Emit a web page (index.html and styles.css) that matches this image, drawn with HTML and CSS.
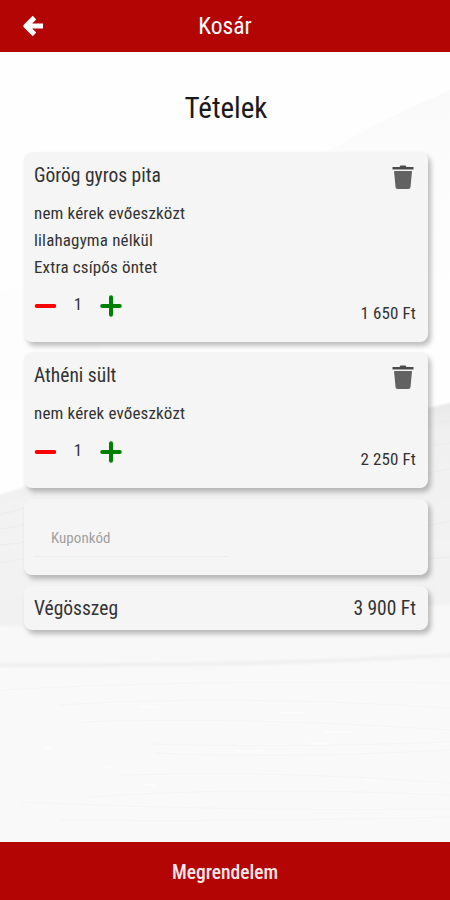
FILE: index.html
```html
<!DOCTYPE html>
<html lang="hu">
<head>
<meta charset="utf-8">
<meta name="viewport" content="width=device-width, initial-scale=1">
<title>Kosár</title>
<link rel="stylesheet" href="styles.css">
</head>
<body>
<div class="screen">
  <svg class="backdrop" viewBox="0 0 450 900" preserveAspectRatio="none" aria-hidden="true">
    <defs>
      <linearGradient id="wave" x1="0" y1="0" x2="0" y2="1">
        <stop offset="0" stop-color="#e8e8e8"/>
        <stop offset=".12" stop-color="#f0f0f0"/>
        <stop offset=".6" stop-color="#f3f3f3"/>
        <stop offset="1" stop-color="#f1f1f1"/>
      </linearGradient>
      <linearGradient id="ridge" x1="0" y1="0" x2="0" y2="1">
        <stop offset="0" stop-color="#fafafa"/>
        <stop offset="1" stop-color="#fefefe"/>
      </linearGradient>
      <filter id="soft"><feGaussianBlur stdDeviation="1.2"/></filter>
    </defs>
    <rect width="450" height="900" fill="#fefefe"/>
    <path d="M300 168Q370 124 450 90V300H0V292Q150 250 300 168Z" fill="url(#ridge)"/>
    <path d="M0 292L100 272V400H0Z" fill="#fdfdfd"/>
    <g filter="url(#soft)">
      <path d="M-5 496Q60 474 150 462T455 402V640H-5Z" fill="url(#wave)"/>
      <path d="M-5 626Q180 630 455 604V700H-5Z" fill="#f8f8f8"/>
      <path d="M-5 665Q240 667 455 655" fill="none" stroke="#f0f0f0" stroke-width="4"/>
      <path d="M-5 669Q240 671 455 659V910H-5Z" fill="#f9f9f9"/>
    </g>
    <g fill="none" stroke="#e9e9e9" stroke-width="1" opacity=".7">
      <path d="M0 514Q16 512 30 506M0 529Q16 527 30 523M0 545Q16 544 30 541M0 563Q16 561 30 557M425 425Q438 421 450 421M425 447Q438 444 450 443M425 474Q438 471 450 469M425 526Q438 524 450 521M425 559Q438 558 450 557"/>
    </g>
    <g fill="none" stroke="#f5f5f5" stroke-width="1">
      <path d="M0 690Q200 679 450 683M60 705Q230 694 450 708M80 722Q240 716 450 730M150 744Q280 748 450 742M155 753Q280 759 450 750M120 775Q280 770 450 783M90 797Q240 786 450 795M20 802Q240 812 450 809M60 820Q240 822 450 817"/>
    </g>
    <g fill="none" stroke="#fefefe" stroke-width="1">
      <path d="M140 707h18M325 732h26M310 744h22M236 751h30M145 785h10M365 780h11M280 713h24M45 748h8M104 767h6"/>
    </g>
  </svg>

  <header class="topbar">
    <svg class="back" viewBox="0 0 20 22" role="button" aria-label="Vissza"><path d="M11.500 2.600L3 11L11.500 19.400M4 11H20" fill="none" stroke="#fff" stroke-width="5" stroke-linejoin="round"/></svg>
    <h1 class="topbar-title">Kosár</h1>
  </header>

  <main class="content">
    <h2 class="heading">Tételek</h2>

    <section class="card item">
      <div class="row">
        <h3 class="name">Görög gyros pita</h3>
        <svg class="trash" viewBox="0 0 22 24"><path d="M.5 2H7.500L8.500.5H13.500L14.500 2H21.500V4.500H.5Z" fill="#4a4a4a"/><path d="M2 6H20L18.500 22Q18.300 24 16.500 24H5.500Q3.700 24 3.500 22Z" fill="#626262"/></svg>
      </div>
      <ul class="extras">
        <li>nem kérek evőeszközt</li>
        <li>lilahagyma nélkül</li>
        <li>Extra csípős öntet</li>
      </ul>
      <div class="row foot">
        <div class="stepper">
          <svg class="op" viewBox="0 0 22 22"><path d="M2.700 11H20.300" stroke="red" stroke-width="4" stroke-linecap="round"/></svg>
          <span class="qty">1</span>
          <svg class="op" viewBox="0 0 22 22"><path d="M2.200 11H19.800M11 2.200V19.800" stroke="green" stroke-width="4" stroke-linecap="round"/></svg>
        </div>
        <span class="price">1 650 Ft</span>
      </div>
    </section>

    <section class="card item">
      <div class="row">
        <h3 class="name">Athéni sült</h3>
        <svg class="trash" viewBox="0 0 22 24"><path d="M.5 2H7.500L8.500.5H13.500L14.500 2H21.500V4.500H.5Z" fill="#4a4a4a"/><path d="M2 6H20L18.500 22Q18.300 24 16.500 24H5.500Q3.700 24 3.500 22Z" fill="#626262"/></svg>
      </div>
      <ul class="extras">
        <li>nem kérek evőeszközt</li>
      </ul>
      <div class="row foot">
        <div class="stepper">
          <svg class="op" viewBox="0 0 22 22"><path d="M2.700 11H20.300" stroke="red" stroke-width="4" stroke-linecap="round"/></svg>
          <span class="qty">1</span>
          <svg class="op" viewBox="0 0 22 22"><path d="M2.200 11H19.800M11 2.200V19.800" stroke="green" stroke-width="4" stroke-linecap="round"/></svg>
        </div>
        <span class="price">2 250 Ft</span>
      </div>
    </section>

    <section class="card coupon">
      <div class="field"><span class="hint">Kuponkód</span></div>
    </section>

    <section class="card total">
      <span class="sum-label">Végösszeg</span>
      <span class="sum">3 900 Ft</span>
    </section>
  </main>

  <footer class="order"><span class="order-label">Megrendelem</span></footer>
</div>
</body>
</html>
```
FILE: styles.css
```css
* { box-sizing: border-box; margin: 0; padding: 0; }

body {
  font-family: "Roboto Condensed", Roboto, sans-serif;
  font-stretch: 75%;
  font-weight: 400;
  color: #333;
}

h1, h2, h3 { font-weight: 400; }

.screen {
  position: relative;
  display: flex;
  flex-direction: column;
  width: 450px;
  height: 900px;
  overflow: hidden;
}

.backdrop {
  position: absolute;
  inset: 0;
  z-index: -1;
  width: 100%;
  height: 100%;
}

.topbar {
  display: grid;
  grid-template-columns: 43px 1fr 43px;
  align-items: center;
  height: 52px;
  background: #b30504;
  color: #fff;
}

.back { width: 20px; height: 22px; margin-left: 23px; }

.topbar-title {
  justify-self: center;
  font-size: 23.5px;
  line-height: 52px;
  font-weight: 400;
}

.content {
  flex: 1;
  display: flex;
  flex-direction: column;
  padding: 0 22px 0 24px;
}

.heading {
  align-self: center;
  height: 100px;
  font-size: 29px;
  line-height: 112px;
  color: #1a1a1a;
}

.card {
  padding: 0 12px 0 10px;
  border-radius: 8px;
  background: #f5f5f5;
  box-shadow: 3px 4px 5px rgba(0, 0, 0, .25);
}

.item { padding-top: 11px; margin-bottom: 10px; height: 190px; }
.item + .item { height: 136px; margin-bottom: 11px; }

.row { display: flex; justify-content: space-between; }

.name { font-size: 19.5px; line-height: 25px; }

.trash { width: 22px; height: 24px; margin: 2px 2px 0 0; }

.extras {
  padding-top: 11px;
  list-style: none;
  font-size: 17px;
  line-height: 27px;
  letter-spacing: 0.15px;
}

.foot { height: 40px; }

.stepper { display: flex; padding-top: 14px; }
.op { width: 22px; height: 22px; }
.qty { width: 44px; text-align: center; font-size: 17px; line-height: 19px; }

.price { padding-top: 21px; font-size: 17px; line-height: 23px; letter-spacing: 0.1px; }

.coupon { height: 76px; margin-bottom: 11px; padding-top: 23px; }

.field {
  width: 194px;
  height: 35px;
  padding-left: 17px;
  border-bottom: 1px solid #ececec;
}

.hint { font-size: 15px; line-height: 32px; letter-spacing: 0.05px; color: #a0a0a0; }

.total {
  display: flex;
  justify-content: space-between;
  height: 44px;
  font-size: 19.5px;
  line-height: 45px;
}

.order {
  display: flex;
  justify-content: center;
  height: 58px;
  background: #b30504;
  color: #fbe9e9;
  font-size: 19.5px;
  line-height: 61px;
  font-weight: 500;
}
```
